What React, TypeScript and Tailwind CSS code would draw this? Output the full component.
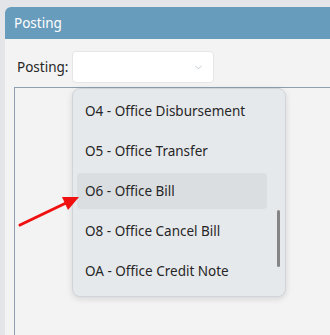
import React from 'react';
import { ChevronDown } from 'lucide-react';

const options = [
  'O4 - Office Disbursement',
  'O5 - Office Transfer',
  'O6 - Office Bill',
  'O8 - Office Cancel Bill',
  'OA - Office Credit Note',
];

export default function App() {
  return (
    <div
      className="relative w-[330px] h-[335px] overflow-hidden bg-[#e3e5e8] pt-[7px] pl-[5px] flex flex-col text-[#262626]"
      style={{ fontFamily: '"Noto Sans", "Open Sans", sans-serif' }}
    >
      {/* window */}
      <div className="flex-1 flex flex-col rounded-tl-[6px] overflow-hidden bg-[#f3f3f3]">
        <div className="h-[32px] shrink-0 bg-[#689cbc] text-white text-[13.5px] pl-[9px] flex items-center">
          Posting
        </div>
        <div className="flex-1 flex flex-col pt-[12px] pl-[9px]">
          <div className="flex items-center ml-[3px]">
            <span className="w-[55px] text-[13.5px]">Posting:</span>
            <div className="w-[142px] h-[32px] bg-white rounded-[4px] border border-[#e6e6e6] flex items-center justify-end pr-[9px]">
              <ChevronDown className="w-[11px] h-[11px] text-[#a8b4c0]" strokeWidth={1.5} />
            </div>
          </div>
          <div className="flex-1 mt-[4px] border-l border-t border-[#8e9fb0]" />
        </div>
      </div>

      {/* open dropdown list */}
      <div className="absolute left-[72px] top-[88px] w-[214px] h-[209px] bg-[#e6e9ec] border border-[#d0d4d9] rounded-[8px] shadow-[0_2px_6px_rgba(0,0,0,0.12)] pt-[2px]">
        {options.map((o, i) => (
          <div key={o} className="h-[40px] pl-[4px] pr-[18px] py-[2px]">
            <div
              className={`h-full rounded-[4px] pl-[8px] flex items-center text-[13.5px] ${
                i === 2 ? 'bg-[#dbdee1]' : ''
              }`}
            >
              {o}
            </div>
          </div>
        ))}
        <div className="absolute left-[204px] top-[121px] w-[3px] h-[57px] rounded-full bg-[#858585]" />
      </div>

      {/* red arrow annotation */}
      <svg className="absolute left-0 top-0" width="330" height="335" viewBox="0 0 330 335">
        <line x1="20" y1="225" x2="66" y2="203" stroke="#f01010" strokeWidth="3" strokeLinecap="round" />
        <polygon points="79,197 62,197 68,210" fill="#f01010" />
      </svg>
    </div>
  );
}
